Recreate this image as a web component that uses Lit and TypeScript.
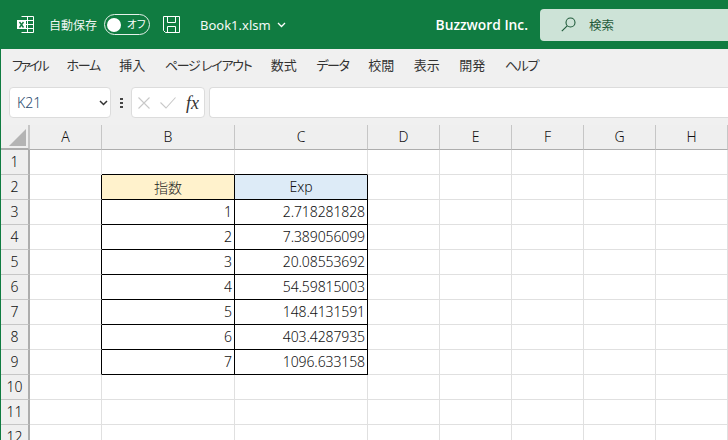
import { LitElement, html, css, svg } from "lit";
import { customElement } from "lit/decorators.js";

const COLS = ["A", "B", "C", "D", "E", "F", "G", "H"];
const DATA = ["2.718281828", "7.389056099", "20.08553692", "54.59815003", "148.4131591", "403.4287935", "1096.633158"];
const TABS = [
  { t: "ファイル", c: "k2" }, { t: "ホーム", c: "k1" }, { t: "挿入", c: "" }, { t: "ページ レイアウト", c: "k1" },
  { t: "数式", c: "" }, { t: "データ", c: "k1" }, { t: "校閲", c: "" }, { t: "表示", c: "" }, { t: "開発", c: "" }, { t: "ヘルプ", c: "k1" },
];

@customElement("app-root")
export class AppRoot extends LitElement {
  static styles = css`
    :host { display: block; width: 728px; height: 440px; overflow: hidden; background: #f0f0f0;
      font-family: "Noto Sans", "Noto Sans CJK JP", sans-serif; color: #2b2b2b; }
    .title { height: 49px; background: #107c41; color: #fff; display: flex; align-items: center; font-size: 12.5px; }
    .xl { margin-left: 17px; width: 17px; height: 17px; }
    .auto { margin-left: 15px; width: 55px; white-space: nowrap; font-size: 12px; font-family: "Noto Sans CJK JP", sans-serif; color: #f0f6f2; }
    .toggle { width: 46px; height: 21px; box-sizing: border-box; border: 1px solid #e6f1ea; border-radius: 11px;
      display: flex; align-items: center; padding-left: 2px; }
    .knob { width: 14px; height: 14px; background: #fff; border-radius: 50%; flex: none; }
    .off { margin-left: 6px; font-size: 10.5px; font-family: "Noto Sans CJK JP", sans-serif; line-height: 1; white-space: nowrap; font-feature-settings: "palt"; }
    .save { margin-left: 13px; width: 17px; height: 17px; }
    .book { margin-left: 20px; font-size: 13px; color: #f4f9f6; }
    .chev { margin-left: 6px; width: 9px; height: 6px; }
    .co { margin-left: auto; font-size: 13.8px; font-weight: 600; color: #fff; font-family: "Open Sans", sans-serif; }
    .search { margin-left: 12px; width: 188px; height: 32px; background: #cde3d7; border-radius: 4px 0 0 4px; display: flex;
      align-items: center; color: #1f5a3a; font-size: 12.5px; font-family: "Noto Sans CJK JP", sans-serif; }
    .search svg { margin-left: 21px; width: 15px; height: 15px; }
    .search span { margin-left: 13px; }
    .below { display: flex; }
    .strip { width: 1px; flex: none; background: #107c41; }
    .main { flex: 1; min-width: 0; }
    .tabs { height: 31px; display: flex; align-items: center; gap: 19.5px; padding-left: 11px;
      font-size: 13px; font-family: "Noto Sans CJK JP", sans-serif; font-feature-settings: "palt"; color: #333; white-space: nowrap; }
    .k1 { letter-spacing: -1.3px; }
    .k2 { letter-spacing: -2.5px; }
    .fbar { margin-top: 7px; height: 31px; display: flex; align-items: stretch; padding-left: 8px; }
    .box { background: #fff; border: 1px solid #dcdcdc; border-radius: 4px; box-sizing: border-box; }
    .name { width: 102px; display: flex; align-items: center; padding: 0 2px 0 7px; justify-content: space-between; font-size: 14px; font-weight: 300; color: #2a4a6e; }
    .name svg { width: 9px; height: 6px; }
    .dots { width: 20px; display: flex; flex-direction: column; justify-content: center; align-items: center; gap: 2px; }
    .dots i { width: 3px; height: 2px; background: #444; }
    .fx { width: 74px; display: flex; align-items: center; padding-left: 6px; gap: 10px; }
    .fx svg { width: 12px; height: 12px; flex: none; }
    .fx svg.chk { width: 16px; }
    .fx em { font-family: "Liberation Serif", serif; font-size: 18px; font-style: italic; font-weight: 400; color: #333; white-space: nowrap; line-height: 1; }
    .formula { margin-left: 4px; flex: 1; border-right: none; border-radius: 4px 0 0 4px; }
    .grid { margin-top: 7px; background: #fff; display: grid; grid-template-columns: 29px 72px 133px 133px 72px 72px 72px 72px 72px; grid-auto-rows: 25px;
      font-family: "Noto Sans", sans-serif; font-weight: 300; font-size: 14px; color: #111; }
    .cell { box-sizing: border-box; border-right: 1px solid #e0e0e0; border-bottom: 1px solid #e0e0e0; display: flex; align-items: center; line-height: 1; white-space: nowrap; }
    .num { justify-content: flex-end; padding-right: 2px; letter-spacing: -0.1px; }
    .ctr { justify-content: center; }
    .jp { font-family: "Noto Sans CJK JP", sans-serif; font-size: 14px; color: #222; }
    .hd { background: #efefef; border-right: 1px solid #c6c6c6; border-bottom: 1px solid #adadad; justify-content: center; }
    .rh { background: #efefef; border-right: 2px solid #adadad; border-bottom: 1px solid #c6c6c6; justify-content: center; }
    .corner { background: #efefef; box-sizing: border-box; border-right: 2px solid #c6c6c6; border-bottom: 2px solid #adadad; display: flex; justify-content: flex-end; align-items: flex-end; padding: 0 2px 2px 0; }
    .corner svg { width: 17px; height: 17px; }
    .yel { background: #fff2cc; }
    .blu { background: #ddebf7; }
    .br { border-right-color: #000; }
    .bb { border-bottom-color: #000; }
  `;

  private cell(r: number, c: number) {
    const right = r >= 2 && r <= 9 && c <= 2;
    const bottom = r >= 1 && r <= 9 && (c === 1 || c === 2);
    const cls = ["cell"];
    if (right) cls.push("br");
    if (bottom) cls.push("bb");
    let text = "";
    if (r === 2 && c === 1) { cls.push("yel", "ctr", "jp"); text = "指数"; }
    else if (r === 2 && c === 2) { cls.push("blu", "ctr"); text = "Exp"; }
    else if (r >= 3 && r <= 9 && c === 1) { cls.push("num"); text = String(r - 2); }
    else if (r >= 3 && r <= 9 && c === 2) { cls.push("num"); text = DATA[r - 3]; }
    return html`<div class=${cls.join(" ")}>${text}</div>`;
  }

  render() {
    const rows = Array.from({ length: 12 }, (_, i) => i + 1);
    return html`
      <div class="title">
        <svg class="xl" viewBox="0 0 17 17">
          <path d="M4.5 .5H16.5V16.5H4.5M4.5 4.5H16.5M4.5 8.5H16.5M4.5 12.5H16.5M10.5 .5V16.5" fill="none" stroke="#fff" />
          <rect x="0" y="4" width="9" height="9" fill="#fff" />
          <path d="M2.5 6L6.5 11.5M6.5 6L2.5 11.5" stroke="#107c41" stroke-width="1.4" />
        </svg>
        <div class="auto">自動保存</div>
        <div class="toggle"><div class="knob"></div><div class="off">オフ</div></div>
        <svg class="save" viewBox="0 0 17 17" fill="none" stroke="#fff">
          <path d="M.5 .5H16.5V16.5H2.5L.5 14.5Z M4.5 .5V6.5H12.5V.5 M4.5 16.5V10.5H12.5V16.5" />
        </svg>
        <div class="book">Book1.xlsm</div>
        <svg class="chev" viewBox="0 0 9 6"><path d="M1 1L4.5 4.5L8 1" fill="none" stroke="#fff" stroke-width="1.3" /></svg>
        <div class="co">Buzzword Inc.</div>
        <div class="search">
          <svg viewBox="0 0 15 15" fill="none" stroke="#1f5a3a" stroke-width="1.1">
            <circle cx="9.5" cy="5.5" r="4.5" /><path d="M6.2 8.8L.8 14.2" />
          </svg>
          <span>検索</span>
        </div>
      </div>
      <div class="below">
        <div class="strip"></div>
        <div class="main">
          <div class="tabs">${TABS.map((t) => html`<span class=${t.c}>${t.t}</span>`)}</div>
          <div class="fbar">
            <div class="box name">K21
              <svg viewBox="0 0 9 6"><path d="M1 1L4.5 4.5L8 1" fill="none" stroke="#333" stroke-width="1.5" /></svg>
            </div>
            <div class="dots"><i></i><i></i><i></i></div>
            <div class="box fx">
              <svg viewBox="0 0 12 12"><path d="M.5 .5L11.5 11.5M11.5 .5L.5 11.5" stroke="#c8c8c8" stroke-width="1.1" fill="none" /></svg>
              <svg class="chk" viewBox="0 0 16 12"><path d="M.5 5.5L6 11L15.5 .5" stroke="#c8c8c8" stroke-width="1.1" fill="none" /></svg>
              <em>fx</em>
            </div>
            <div class="box formula"></div>
          </div>
          <div class="grid">
            <div class="corner"><svg viewBox="0 0 17 17">${svg`<path d="M17 0V17H0Z" fill="#b4b4b4" />`}</svg></div>
            ${COLS.map((c) => html`<div class="cell hd">${c}</div>`)}
            ${rows.map((r) => html`
              <div class="cell rh">${r}</div>
              ${COLS.map((_, c) => this.cell(r, c))}
            `)}
          </div>
        </div>
      </div>
    `;
  }
}
